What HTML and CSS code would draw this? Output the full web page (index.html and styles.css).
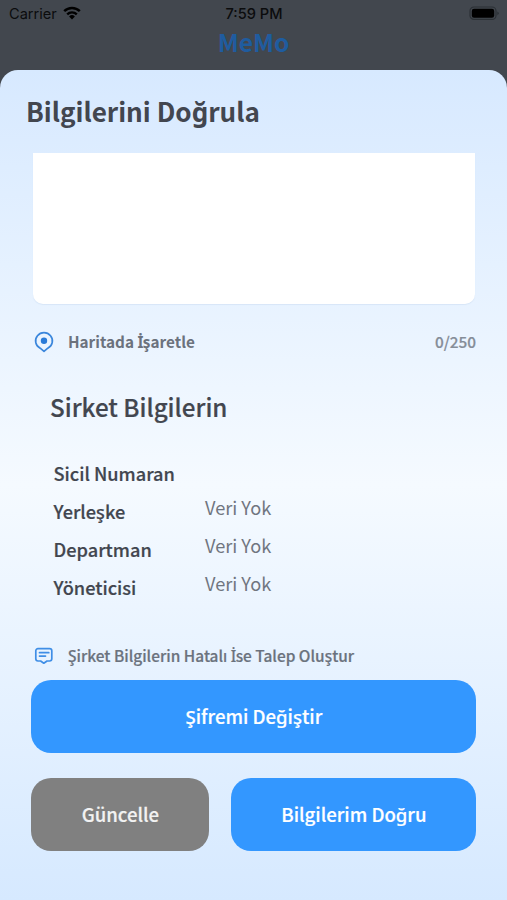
FILE: index.html
```html
<!DOCTYPE html>
<html lang="tr">
<head>
  <meta charset="UTF-8">
  <title>MeMo</title>
  <meta name="viewport" content="width=device-width, initial-scale=1.0">

  <link rel="stylesheet" href="styles.css">
</head>
<body>

  <!-- Durum çubuğu -->
  <header class="top">
    <div class="status-bar">
      <div class="carrier">
        <span>Carrier</span>
        <svg class="wifi" viewBox="0 0 18 14">
          <path d="M1.2 5.2a11.2 11.2 0 0 1 15.6 0" fill="none" stroke="#000" stroke-width="2.5"/>
          <path d="M4.2 8.3a6.9 6.9 0 0 1 9.6 0" fill="none" stroke="#000" stroke-width="2.4"/>
          <path d="M9 13.4l-2.9-3a4.1 4.1 0 0 1 5.8 0z"/>
        </svg>
      </div>
      <span class="clock">7:59 PM</span>
      <svg class="battery" viewBox="0 0 30 15">
        <rect x="1" y="1" width="26" height="12.4" rx="4" fill="none" stroke="#2b3035" stroke-width="1.2"/>
        <rect x="2.8" y="2.7" width="22.4" height="9" rx="2.2"/>
        <path d="M28.3 5.4q1.4 .7 1.4 1.9t-1.4 1.9z" fill="#2b3035"/>
      </svg>
    </div>
    <div class="brand">MeMo</div>
  </header>

  <!-- Panel -->
  <main class="sheet">
    <h1>Bilgilerini Doğrula</h1>
    <div class="address-box"></div>

    <div class="hint-row">
      <svg class="pin" viewBox="0 0 20 22">
        <path d="M10 20.3L6.2 17.2A8.4 8.2 0 1 1 13.8 17.2z" fill="none" stroke="#3a86dc" stroke-width="1.7" stroke-linejoin="round"/>
        <circle cx="10" cy="9.7" r="3.2" fill="#2a7bd8"/>
      </svg>
      <span class="hint map-hint">Haritada <span class="dotted">İ</span>şaretle</span>
      <span class="counter">0/250</span>
    </div>

    <h2>Sirket Bilgilerin</h2>
    <div class="company">
      <div class="labels">
        <span>Sicil Numaran</span>
        <span>Yerleşke</span>
        <span>Departman</span>
        <span>Yöneticisi</span>
      </div>
      <div class="values">
        <span>Veri Yok</span>
        <span>Veri Yok</span>
        <span>Veri Yok</span>
      </div>
    </div>

    <div class="hint-row request">
      <svg class="note" viewBox="0 0 20 18">
        <path d="M4 1.6h11.6a2.2 2.2 0 0 1 2.2 2.2v8a2.2 2.2 0 0 1-2.2 2.2H13l-3.2 2.2L6.600 14H4a2.200 2.200 0 0 1-2.200-2.200v-8A2.200 2.200 0 0 1 4 1.600z" fill="none" stroke="#3f8ee6" stroke-width="1.7" stroke-linejoin="round"/>
        <path d="M5.500 5.700h9.300M5.500 9.100h6" stroke="#3f8ee6" stroke-width="1.7" stroke-linecap="round"/>
      </svg>
      <span class="hint">Şirket Bilgilerin Hatalı <span class="dotted">İ</span>se Talep Oluştur</span>
    </div>

    <div class="buttons">
      <button class="btn wide">Şifremi Değiştir</button>
      <button class="btn update">Güncelle</button>
      <button class="btn confirm">Bilgilerim Doğru</button>
    </div>
  </main>

</body>
</html>
```
FILE: styles.css
```css
/* Genel */
* {
  box-sizing: border-box;
}
body {
  margin: 0;
  height: 900px;
  display: flex;
  flex-direction: column;
  background: #42474e;
  font-family: "Noto Sans CJK SC", "Noto Sans", sans-serif;
  overflow: hidden;
}
h1, h2 {
  margin: 0;
}

/* Durum çubuğu */
.top {
  height: 70px;
  flex: none;
}
.status-bar {
  display: grid;
  grid-template-columns: 1fr auto 1fr;
  align-items: center;
  height: 27px;
  padding: 0 8px 0 9px;
  font: 14.6px/27px Inter, sans-serif;
  color: #0b0c0d;
}
.carrier {
  display: flex;
  align-items: center;
  gap: 6px;
}
.carrier span, .clock {
  padding-top: 1px;
}
.wifi {
  width: 18px;
  height: 14px;
  margin-top: -2px;
}
.clock {
  font-weight: 500;
}
.battery {
  width: 30px;
  height: 15px;
  margin-top: -1px;
  justify-self: end;
}
.brand {
  line-height: 29px;
  text-align: center;
  font-size: 24.6px;
  font-weight: 700;
  color: #1f5c9f;
}

/* Panel */
.sheet {
  flex: 1;
  padding: 21px 30px 0 31px;
  border-radius: 18px 18px 0 0;
  background: linear-gradient(#d7e9ff, #f5faff 50%, #d6e9ff);
}
h1 {
  margin-left: -5px;
  font-size: 26.1px;
  line-height: 40px;
  color: #42464f;
}
.address-box {
  height: 151px;
  margin: 22px 2px 0;
  background: #fff;
  border-radius: 0 0 10px 10px;
  box-shadow: 0 1px 1px rgba(120,160,200,0.15);
}
.hint-row {
  display: flex;
  align-items: center;
  height: 24px;
  margin-top: 26px;
  padding-left: 3px;
}
.pin {
  width: 20px;
  height: 22px;
}
.note {
  width: 20px;
  height: 18px;
}
.hint {
  margin-left: 14px;
  font-size: 15.45px;
  font-weight: 500;
  line-height: 23px;
  color: #6b727d;
  white-space: nowrap;
  -webkit-text-stroke: 0.2px;
}
.map-hint {
  font-size: 15.3px;
  font-weight: 700;
  -webkit-text-stroke: 0;
}
/* noktalı büyük İ */
.dotted {
  font-family: "Noto Sans", sans-serif;
  letter-spacing: -0.6px;
}
.counter {
  margin: 0 1px 0 auto;
  font-size: 15.4px;
  font-weight: 500;
  line-height: 22px;
  padding-bottom: 2px;
  color: #858d98;
  -webkit-text-stroke: 0.2px;
}

/* Şirket bilgileri */
h2 {
  margin: 35px 0 0 19px;
  font-size: 24.2px;
  font-weight: 500;
  line-height: 36px;
  color: #42464f;
  -webkit-text-stroke: 0.2px;
}
.company {
  display: flex;
  margin-top: 29px;
  padding-left: 22.5px;
  font-size: 18.2px;
  line-height: 38px;
}
.labels, .values {
  display: flex;
  flex-direction: column;
}
.labels {
  width: 151.5px;
  font-weight: 500;
  color: #42464f;
  -webkit-text-stroke: 0.2px;
}
.values {
  padding-top: 34px;
  color: #70757f;
}
.request {
  margin-top: 38px;
}

/* Butonlar */
.buttons {
  display: grid;
  grid-template-columns: 178px 1fr;
  gap: 25px 22px;
  margin: 12px 0 0 0.4px;
  padding-right: 0.6px;
}
.btn {
  height: 73px;
  padding: 0 0 2px;
  border: none;
  border-radius: 20px;
  background: #3397ff;
  color: #fff;
  font-family: inherit;
  font-size: 18.6px;
  font-weight: 500;
  -webkit-text-stroke: 0.2px;
}
.wide {
  grid-column: 1 / 3;
}
.update {
  background: #808080;
  color: #f2f2f2;
}
```
